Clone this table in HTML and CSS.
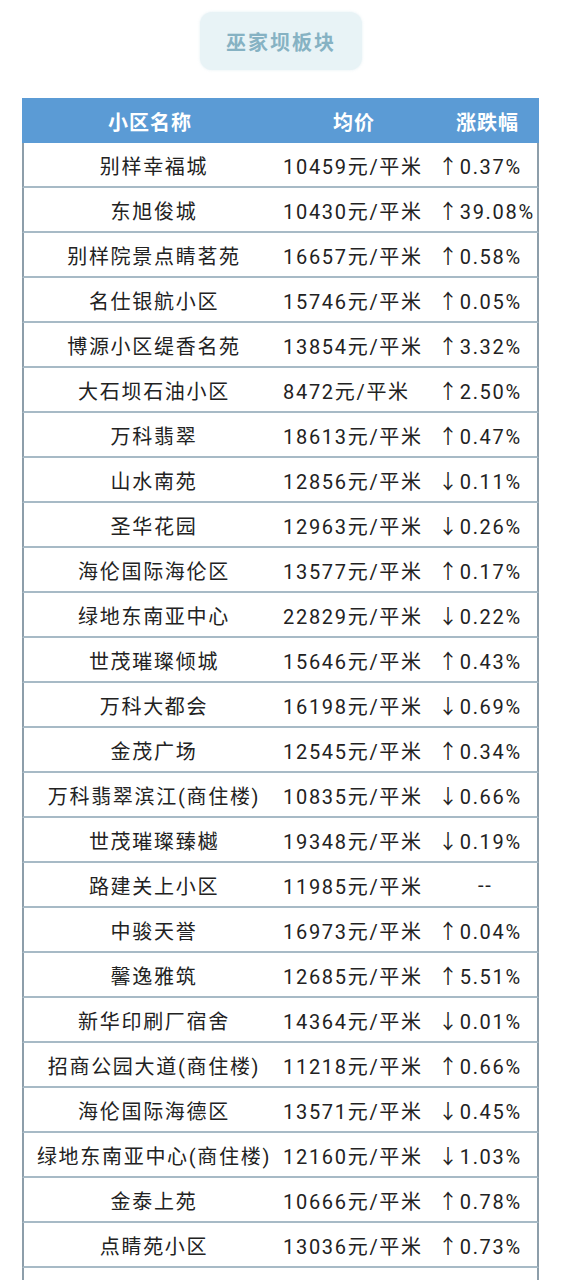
FILE: index.html
```html
<!DOCTYPE html>
<html lang="zh-CN">
<head>
<meta charset="utf-8">
<link rel="stylesheet" href="styles.css">
</head>
<body>
<div class="title-wrap"><div class="title">巫家坝板块</div></div>
<div class="table">
  <div class="row head"><div class="c name">小区名称</div><div class="c price">均价</div><div class="c chg">涨跌幅</div></div>
  <div class="row"><div class="c name">别样幸福城</div><div class="c price">10459元/平米</div><div class="c chg">↑0.37%</div></div>
  <div class="row"><div class="c name">东旭俊城</div><div class="c price">10430元/平米</div><div class="c chg">↑39.08%</div></div>
  <div class="row"><div class="c name">别样院景点睛茗苑</div><div class="c price">16657元/平米</div><div class="c chg">↑0.58%</div></div>
  <div class="row"><div class="c name">名仕银航小区</div><div class="c price">15746元/平米</div><div class="c chg">↑0.05%</div></div>
  <div class="row"><div class="c name">博源小区缇香名苑</div><div class="c price">13854元/平米</div><div class="c chg">↑3.32%</div></div>
  <div class="row"><div class="c name">大石坝石油小区</div><div class="c price">8472元/平米</div><div class="c chg">↑2.50%</div></div>
  <div class="row"><div class="c name">万科翡翠</div><div class="c price">18613元/平米</div><div class="c chg">↑0.47%</div></div>
  <div class="row"><div class="c name">山水南苑</div><div class="c price">12856元/平米</div><div class="c chg">↓0.11%</div></div>
  <div class="row"><div class="c name">圣华花园</div><div class="c price">12963元/平米</div><div class="c chg">↓0.26%</div></div>
  <div class="row"><div class="c name">海伦国际海伦区</div><div class="c price">13577元/平米</div><div class="c chg">↑0.17%</div></div>
  <div class="row"><div class="c name">绿地东南亚中心</div><div class="c price">22829元/平米</div><div class="c chg">↓0.22%</div></div>
  <div class="row"><div class="c name">世茂璀璨倾城</div><div class="c price">15646元/平米</div><div class="c chg">↑0.43%</div></div>
  <div class="row"><div class="c name">万科大都会</div><div class="c price">16198元/平米</div><div class="c chg">↓0.69%</div></div>
  <div class="row"><div class="c name">金茂广场</div><div class="c price">12545元/平米</div><div class="c chg">↑0.34%</div></div>
  <div class="row"><div class="c name">万科翡翠滨江(商住楼)</div><div class="c price">10835元/平米</div><div class="c chg">↓0.66%</div></div>
  <div class="row"><div class="c name">世茂璀璨臻樾</div><div class="c price">19348元/平米</div><div class="c chg">↓0.19%</div></div>
  <div class="row"><div class="c name">路建关上小区</div><div class="c price">11985元/平米</div><div class="c chg none">--</div></div>
  <div class="row"><div class="c name">中骏天誉</div><div class="c price">16973元/平米</div><div class="c chg">↑0.04%</div></div>
  <div class="row"><div class="c name">馨逸雅筑</div><div class="c price">12685元/平米</div><div class="c chg">↑5.51%</div></div>
  <div class="row"><div class="c name">新华印刷厂宿舍</div><div class="c price">14364元/平米</div><div class="c chg">↓0.01%</div></div>
  <div class="row"><div class="c name">招商公园大道(商住楼)</div><div class="c price">11218元/平米</div><div class="c chg">↑0.66%</div></div>
  <div class="row"><div class="c name">海伦国际海德区</div><div class="c price">13571元/平米</div><div class="c chg">↓0.45%</div></div>
  <div class="row"><div class="c name">绿地东南亚中心(商住楼)</div><div class="c price">12160元/平米</div><div class="c chg">↓1.03%</div></div>
  <div class="row"><div class="c name">金泰上苑</div><div class="c price">10666元/平米</div><div class="c chg">↑0.78%</div></div>
  <div class="row"><div class="c name">点睛苑小区</div><div class="c price">13036元/平米</div><div class="c chg">↑0.73%</div></div>
  <div class="row"><div class="c name"></div><div class="c price"></div><div class="c chg"></div></div>
</div>
</body>
</html>
```

FILE: styles.css
```css
html, body {
  margin: 0;
  padding: 0;
  background: #ffffff;
}
body {
  font-family: Roboto, "Noto Sans CJK SC", sans-serif;
  color: #222222;
}
.title-wrap {
  display: flex;
  justify-content: center;
  padding-top: 12px;
}
.title {
  width: 162px;
  height: 58px;
  box-sizing: border-box;
  display: flex;
  align-items: center;
  justify-content: center;
  background: #e8f3f6;
  border-radius: 12px;
  box-shadow: 0 0 3px rgba(210, 230, 236, 0.6);
  color: #86b2c3;
  font-size: 20px;
  font-weight: 700;
  letter-spacing: 2px;
  font-family: "Noto Sans CJK SC", sans-serif;
}
.table {
  margin: 28px 0 0 22px;
  width: 517px;
}
.row {
  display: grid;
  grid-template-columns: 256px 152px 1fr;
  height: 45px;
  box-sizing: border-box;
  border-left: 2px solid #8d9eaa;
  border-right: 2px solid #8d9eaa;
  border-bottom: 2px solid #a7bac6;
  font-size: 20px;
  letter-spacing: 1.7px;
}
.row.head {
  background: #5b9bd5;
  border: none;
  color: #ffffff;
  font-weight: 700;
  font-family: "Noto Sans CJK SC", sans-serif;
  letter-spacing: 1px;
}
.c {
  display: flex;
  align-items: center;
  white-space: nowrap;
  padding-top: 1px;
}
.name {
  justify-content: center;
  padding-left: 4px;
}
.price {
  padding-left: 3px;
}
.chg {
  padding-left: 6px;
}
.head .c {
  justify-content: center;
  padding-left: 0;
}
.head .chg {
  padding-left: 6px;
}
.chg.none {
  padding-left: 46px;
}
```
